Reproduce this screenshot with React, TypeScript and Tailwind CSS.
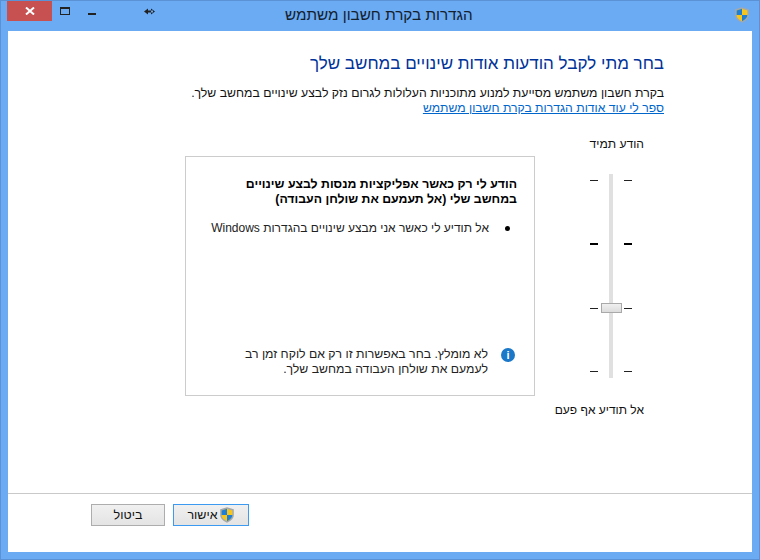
import React from 'react';

const font = "font-['Liberation_Sans',sans-serif]";

function Shield({ size = 16 }: { size?: number }) {
  return (
    <svg width={size} height={size} viewBox="0 0 16 16" className="shrink-0">
      <path d="M8 .2 14.800 2.300V8c0 3.500-3 6-6.800 7.800C4.200 14 1.200 11.500 1.200 8V2.300Z" fill="#a3a8ad" />
      <path d="M8 1.800 13.400 3.400V8c0 2.800-2.300 4.800-5.400 6.200C4.900 12.800 2.600 10.800 2.600 8V3.400Z" fill="#f6c61d" />
      <path d="M8 1.800V8H2.600V3.400ZM8 8H13.400c0 2.800-2.300 4.800-5.400 6.200Z" fill="#1f7fd6" />
    </svg>
  );
}

function TickColumn() {
  return (
    <div className="flex h-[193px] w-2 flex-col justify-between">
      <div className="h-px w-2 bg-[#222]" />
      <div className="h-0.5 w-2 bg-black" />
      <div className="h-px w-2 bg-[#222]" />
      <div className="h-px w-2 bg-[#222]" />
    </div>
  );
}

function Slider() {
  return (
    <div className="mr-[20px] flex w-[96px] flex-col items-start pt-[20px]">
      <div className="text-[12.100px] leading-[16px] text-[#111]">הודע תמיד</div>
      <div className="mt-[22px] flex items-center pr-[12px]">
        <TickColumn />
        <div className="relative mx-[11px] h-[204px] w-1 bg-[#e0e0e0]">
          <div className="absolute left-[-8px] top-[129px] h-[10px] w-[21px] border border-[#a9a9a9] bg-gradient-to-b from-[#f0f0f0] to-[#dcdcdc]" />
        </div>
        <TickColumn />
      </div>
      <div className="mt-[24px] whitespace-nowrap text-[12px] leading-[16px] text-[#111]">אל תודיע אף פעם</div>
    </div>
  );
}

function InfoBox() {
  return (
    <div className="flex h-[240px] w-[350px] flex-col border border-[#cccccc] pb-[18px] pr-[17px] pt-[20px]">
      <div className="text-[12.300px] font-bold leading-[15px] text-black">
        <div>הודע לי רק כאשר אפליקציות מנסות לבצע שינויים</div>
        <div>במחשב שלי (אל תעמעם את שולחן העבודה)</div>
      </div>
      <div className="mt-[14px] flex items-center text-[12px] leading-[15px] text-[#222]">
        <div className="ml-[16px] mr-[7px] size-[5px] rounded-full bg-black" />
        <div>אל תודיע לי כאשר אני מבצע שינויים בהגדרות Windows</div>
      </div>
      <div className="mt-auto flex items-start text-[12.250px] leading-[15px] text-[#222]">
        <div className="ml-[13px] mr-[2px] mt-px flex size-[14px] shrink-0 items-center justify-center rounded-full bg-[#1b78c8] text-[11px] font-bold leading-none text-white">i</div>
        <div>
          <div>לא מומלץ. בחר באפשרות זו רק אם לוקח זמן רב</div>
          <div>לעמעם את שולחן העבודה במחשב שלך.</div>
        </div>
      </div>
    </div>
  );
}

export default function App() {
  return (
    <div className={`flex h-[560px] w-[760px] flex-col overflow-hidden border border-[#5b92d6] bg-[#6aabf4] ${font}`}>
      {/* title bar */}
      <div className="flex h-[30px] items-start" dir="ltr">
        <div className="ml-[6px] flex h-[20px] w-[45px] items-center justify-center bg-[#c75050]">
          <svg width="10" height="8" viewBox="0 0 10 8">
            <path d="M1 .5 9 7.500M9 .5 1 7.500" stroke="#fff" strokeWidth="2" />
          </svg>
        </div>
        <div className="ml-[8px] mt-[6px] h-[8px] w-[10px] border border-t-2 border-[#222]" />
        <div className="ml-[18px] mt-[12px] h-[2px] w-[8px] bg-[#222]" />
        <svg width="11" height="7" viewBox="0 0 11 7" className="ml-[48px] mt-[7px]">
          <path d="M0 3.500 4 .5V6.500ZM11 3.500 7 .5V6.500Z M2 2.500h7v2H2Z" fill="#222" />
        </svg>
        <div className="ml-[130px] mt-[5px] text-[15.250px] leading-[18px] text-[#15202c]" dir="rtl">
          הגדרות בקרת חשבון משתמש
        </div>
        <div className="ml-auto mr-[9px] mt-[6px]">
          <Shield />
        </div>
      </div>

      {/* content */}
      <div className="mx-[7px] mb-[7px] flex flex-1 flex-col bg-white" dir="rtl">
        <div className="flex flex-1 flex-col pr-[88px] pt-[23px]">
          <h1 className="text-[17px] font-normal leading-[20px] text-[#003399]">
            בחר מתי לקבל הודעות אודות שינויים במחשב שלך
          </h1>
          <p className="mt-[12px] text-[12.250px] leading-[15px] text-[#111]">
            בקרת חשבון משתמש מסייעת למנוע מתוכניות העלולות לגרום נזק לבצע שינויים במחשב שלך.
          </p>
          <a className="text-[12.200px] leading-[15px] text-[#0066cc] underline">
            ספר לי עוד אודות הגדרות בקרת חשבון משתמש
          </a>
          <div className="flex items-start">
            <Slider />
            <div className="mr-[13px] mt-[40px]">
              <InfoBox />
            </div>
          </div>
        </div>

        {/* footer */}
        <div className="flex h-[59px] items-start gap-2 border-t border-[#c9c9c9] pr-[503px] pt-[10px]">
          <button className="flex h-[22px] w-[76px] items-center justify-center gap-px border border-[#3c9bf0] bg-gradient-to-b from-[#f0f0f0] to-[#e4e4e4] text-[12.500px] text-[#111]">
            <Shield />
            <span>אישור</span>
          </button>
          <button className="h-[22px] w-[74px] border border-[#adadad] bg-gradient-to-b from-[#f0f0f0] to-[#e4e4e4] text-[12.500px] text-[#111]">
            ביטול
          </button>
        </div>
      </div>
    </div>
  );
}
